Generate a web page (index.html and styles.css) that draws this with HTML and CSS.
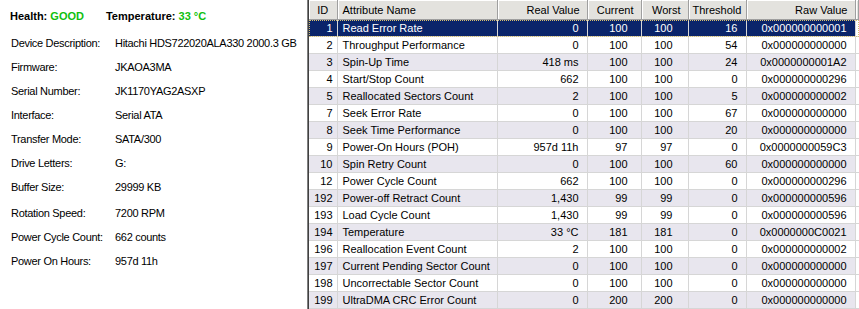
FILE: index.html
```html
<!DOCTYPE html>
<html lang="en">

<head>
    <meta charset="UTF-8">
    <title>Disk Info</title>
    <link rel="stylesheet" href="styles.css">
</head>

<body>
    <div class="info">
        <div class="status">
            <span>Health: <b class="good">GOOD</b></span>
            <span>Temperature: <b class="good">33 °C</b></span>
        </div>
        <div class="info-row"><span class="label">Device Description:</span><span>Hitachi HDS722020ALA330 2000.3 GB</span></div>
        <div class="info-row"><span class="label">Firmware:</span><span>JKAOA3MA</span></div>
        <div class="info-row"><span class="label">Serial Number:</span><span>JK1170YAG2ASXP</span></div>
        <div class="info-row"><span class="label">Interface:</span><span>Serial ATA</span></div>
        <div class="info-row"><span class="label">Transfer Mode:</span><span>SATA/300</span></div>
        <div class="info-row"><span class="label">Drive Letters:</span><span>G:</span></div>
        <div class="info-row"><span class="label">Buffer Size:</span><span>29999 KB</span></div>
        <div class="info-row gap"><span class="label">Rotation Speed:</span><span>7200 RPM</span></div>
        <div class="info-row"><span class="label">Power Cycle Count:</span><span>662 counts</span></div>
        <div class="info-row"><span class="label">Power On Hours:</span><span>957d 11h</span></div>
    </div>

    <div class="attrs">
        <table class="grid">
            <colgroup>
                <col class="c-id">
                <col class="c-name">
                <col class="c-real">
                <col class="c-cur">
                <col class="c-worst">
                <col class="c-thr">
                <col class="c-raw">
                <col>
            </colgroup>
            <thead>
                <tr>
                    <th class="ctr">ID</th>
                    <th class="left">Attribute Name</th>
                    <th>Real Value</th>
                    <th>Current</th>
                    <th>Worst</th>
                    <th>Threshold</th>
                    <th>Raw Value</th>
                    <th></th>
                </tr>
            </thead>
            <tbody>
                <tr class="selected"><td>1</td><td class="left">Read Error Rate</td><td>0</td><td class="cur">100</td><td class="worst">100</td><td>16</td><td>0x000000000001</td><td class="fill"></td></tr>
                <tr><td>2</td><td class="left">Throughput Performance</td><td>0</td><td class="cur">100</td><td class="worst">100</td><td>54</td><td>0x000000000000</td><td class="fill"></td></tr>
                <tr><td>3</td><td class="left">Spin-Up Time</td><td>418 ms</td><td class="cur">100</td><td class="worst">100</td><td>24</td><td>0x0000000001A2</td><td class="fill"></td></tr>
                <tr><td>4</td><td class="left">Start/Stop Count</td><td>662</td><td class="cur">100</td><td class="worst">100</td><td>0</td><td>0x000000000296</td><td class="fill"></td></tr>
                <tr><td>5</td><td class="left">Reallocated Sectors Count</td><td>2</td><td class="cur">100</td><td class="worst">100</td><td>5</td><td>0x000000000002</td><td class="fill"></td></tr>
                <tr><td>7</td><td class="left">Seek Error Rate</td><td>0</td><td class="cur">100</td><td class="worst">100</td><td>67</td><td>0x000000000000</td><td class="fill"></td></tr>
                <tr><td>8</td><td class="left">Seek Time Performance</td><td>0</td><td class="cur">100</td><td class="worst">100</td><td>20</td><td>0x000000000000</td><td class="fill"></td></tr>
                <tr><td>9</td><td class="left">Power-On Hours (POH)</td><td>957d 11h</td><td class="cur">97</td><td class="worst">97</td><td>0</td><td>0x0000000059C3</td><td class="fill"></td></tr>
                <tr><td>10</td><td class="left">Spin Retry Count</td><td>0</td><td class="cur">100</td><td class="worst">100</td><td>60</td><td>0x000000000000</td><td class="fill"></td></tr>
                <tr><td>12</td><td class="left">Power Cycle Count</td><td>662</td><td class="cur">100</td><td class="worst">100</td><td>0</td><td>0x000000000296</td><td class="fill"></td></tr>
                <tr><td>192</td><td class="left">Power-off Retract Count</td><td>1,430</td><td class="cur">99</td><td class="worst">99</td><td>0</td><td>0x000000000596</td><td class="fill"></td></tr>
                <tr><td>193</td><td class="left">Load Cycle Count</td><td>1,430</td><td class="cur">99</td><td class="worst">99</td><td>0</td><td>0x000000000596</td><td class="fill"></td></tr>
                <tr><td>194</td><td class="left">Temperature</td><td>33 °C</td><td class="cur">181</td><td class="worst">181</td><td>0</td><td>0x0000000C0021</td><td class="fill"></td></tr>
                <tr><td>196</td><td class="left">Reallocation Event Count</td><td>2</td><td class="cur">100</td><td class="worst">100</td><td>0</td><td>0x000000000002</td><td class="fill"></td></tr>
                <tr><td>197</td><td class="left">Current Pending Sector Count</td><td>0</td><td class="cur">100</td><td class="worst">100</td><td>0</td><td>0x000000000000</td><td class="fill"></td></tr>
                <tr><td>198</td><td class="left">Uncorrectable Sector Count</td><td>0</td><td class="cur">100</td><td class="worst">100</td><td>0</td><td>0x000000000000</td><td class="fill"></td></tr>
                <tr><td>199</td><td class="left">UltraDMA CRC Error Count</td><td>0</td><td class="cur">200</td><td class="worst">200</td><td>0</td><td>0x000000000000</td><td class="fill"></td></tr>
            </tbody>
        </table>
    </div>
</body>

</html>
```

FILE: styles.css
```css
body {
    font-family: 'Liberation Sans', Arial, sans-serif;
    font-size: 11px;
    margin: 0;
    background: #ffffff;
    color: #000000;
    display: flex;
    height: 309px;
    overflow: hidden;
}

.info {
    width: 307px;
    flex-shrink: 0;
    padding: 10px 0 0 11px;
    box-sizing: border-box;
}

.status {
    display: flex;
    gap: 22px;
    font-weight: bold;
    margin-left: -1px;
    height: 16px;
    margin-bottom: 5px;
}

.good {
    color: #0fc00f;
}

.info-row {
    display: flex;
    height: 24px;
    align-items: center;
    letter-spacing: -0.3px;
}

.info-row.gap {
    margin-top: 2px;
}

.label {
    width: 104px;
    flex-shrink: 0;
}

.attrs {
    flex: 1;
    border-left: 1px solid #808080;
    box-shadow: inset 1px 0 0 #404040;
    padding-left: 1px;
    overflow: hidden;
}

.grid {
    border-collapse: collapse;
    table-layout: fixed;
    width: 100%;
}

.c-id { width: 28px; }
.c-name { width: 160px; }
.c-real { width: 90px; }
.c-cur { width: 54px; }
.c-worst { width: 47px; }
.c-thr { width: 58px; }
.c-raw { width: 109px; }

.grid th {
    background: #e3e2de;
    font-weight: normal;
    height: 19px;
    padding: 0 7px 0 4px;
    text-align: right;
    border-right: 1px solid #9f9f9f;
    border-bottom: 1px solid #9f9f9f;
    box-shadow: inset 1px 1px 0 #ffffff;
    white-space: nowrap;
    overflow: hidden;
}

.grid th.ctr {
    text-align: center;
    padding: 0;
}

.grid th.left {
    text-align: left;
    padding-left: 5px;
}

.grid td {
    height: 16px;
    padding: 0 8px 0 4px;
    text-align: right;
    border-right: 1px solid #d6d6d6;
    border-bottom: 1px solid #d6d6d6;
    white-space: nowrap;
    overflow: hidden;
}

.grid td:first-child {
    padding-right: 4px;
}

.grid td.left {
    text-align: left;
    padding-left: 5px;
}

.grid td.cur {
    padding-right: 13px;
}

.grid td.worst {
    padding-right: 15px;
}

.grid tbody tr:nth-child(odd) {
    background: #e8e6ee;
}

.grid tbody td.fill {
    background: #ffffff;
    border-right: none;
}

.grid tbody tr.selected {
    background: #0a246a;
    color: #ffffff;
    outline: 1px dotted #d8c070;
    outline-offset: -1px;
}
```
